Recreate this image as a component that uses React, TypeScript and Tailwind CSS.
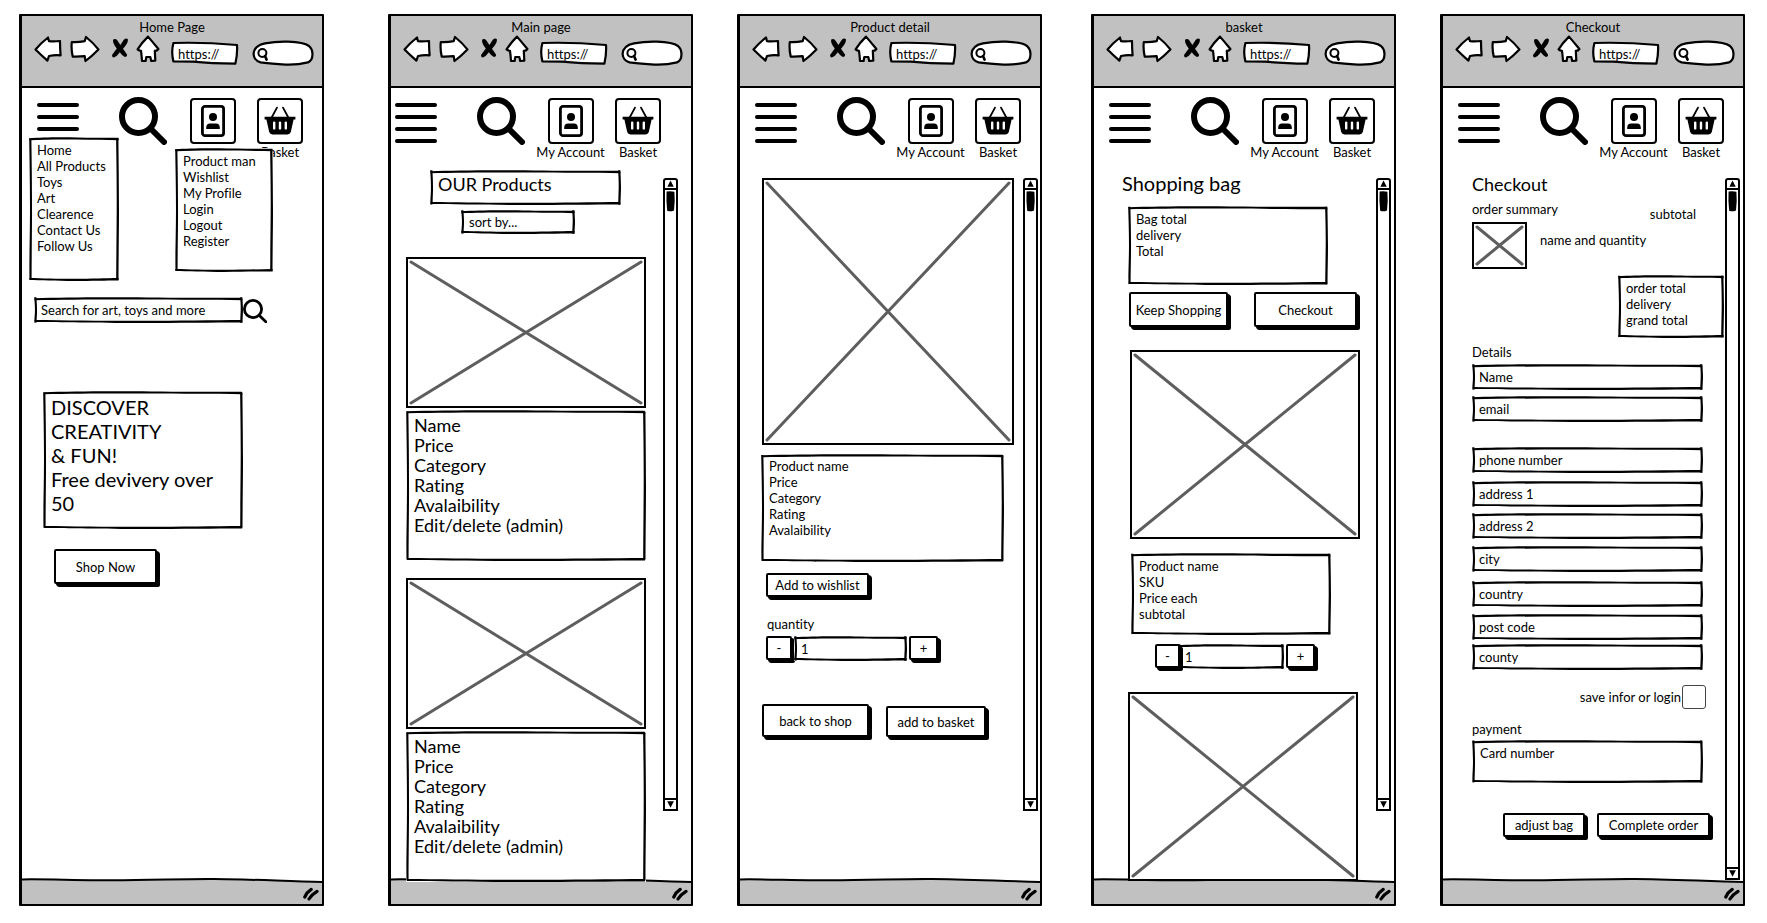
import type { ReactNode } from "react";

/* ---------- Hand-drawn strokes ---------- */

function Edges() {
  return (
    <>
      <svg aria-hidden="true" viewBox="0 0 100 4" preserveAspectRatio="none" className="pointer-events-none absolute inset-x-0 top-0 h-1 w-full">
        <path d="M0.2 1.2 C12 0.2 30 0 45 0.2 C60 0.5 80 1 99.4 0.7 L99.8 3.2 C85 3 70 3 52 2.6 C35 2.4 15 2.6 0.4 3.2Z" />
      </svg>
      <svg aria-hidden="true" viewBox="0 0 100 4" preserveAspectRatio="none" className="pointer-events-none absolute inset-x-0 bottom-0 h-1 w-full">
        <path d="M0.3 0.9 C15 1.2 30 1.8 50 1.8 C70 1.8 85 1.2 99.6 1 L99.6 3.4 C85 3.4 70 3.8 50 4 C30 4 12 3.2 0.4 3Z" />
      </svg>
      <svg aria-hidden="true" viewBox="0 0 4 100" preserveAspectRatio="none" className="pointer-events-none absolute inset-y-0 left-0 h-full w-1">
        <path d="M0.2 1 C0.6 20 1.2 40 0.9 60 C0.6 80 0.2 90 0.5 99 L2.6 98 C2.6 80 3.2 60 3 45 C3 25 2.5 10 2.4 1Z" />
      </svg>
      <svg aria-hidden="true" viewBox="0 0 4 100" preserveAspectRatio="none" className="pointer-events-none absolute inset-y-0 right-0 h-full w-1">
        <path d="M1.1 1 C1.4 15 1.8 30 1.7 50 C1.5 70 1.3 85 1.2 99 L3.5 99 C3.6 80 4 65 4 50 C3.9 30 3.6 15 3.4 1Z" />
      </svg>
    </>
  );
}

function BackIcon() {
  return (
    <svg aria-hidden="true" viewBox="0 0 28 28" className="h-7 w-7">
      <path d="M1.5 14.5 Q7 8 14 2.5 L15 6.2 Q20 6.8 26 6 Q26 13 26.6 20.4 Q21 19.8 15 21 L13.4 25.6 Q7 20 1.5 14.5Z" fill="#fff" stroke="#000" strokeWidth="2.2" strokeLinejoin="round" />
    </svg>
  );
}

function ForwardIcon() {
  return (
    <svg aria-hidden="true" viewBox="0 0 30 28" className="h-7 w-[30px]">
      <path d="M1.8 7 Q8 7.4 14.7 6.2 L16 2 Q23 7.6 28.4 14.4 Q22 21 15.5 26 L14.7 21.2 Q9 21.8 2.7 21.6 Q1 14 1.8 7Z" fill="#fff" stroke="#000" strokeWidth="2.2" strokeLinejoin="round" />
    </svg>
  );
}

function StopIcon() {
  return (
    <svg aria-hidden="true" viewBox="0 0 16 28" className="h-7 w-4">
      <path d="M1.2 4.6 Q3.4 3 5.4 5.4 L8.4 10 L11.8 4.8 Q14.4 2.4 16 4.6 Q16 8.6 11 13.8 L15 19.6 Q15.4 22 12.8 22 Q9.6 20 7.8 17.2 Q4.8 21.6 1.8 22.6 Q-0.4 22 0.2 19.8 L4.8 13.6 Q0.4 8 1.2 4.6Z" />
    </svg>
  );
}

function HomeIcon() {
  return (
    <svg aria-hidden="true" viewBox="0 0 24 28" className="h-7 w-6">
      <path d="M12 1.6 Q17 7.4 22.4 14 Q21 16 18.8 15.8 L19.3 25.6 L15.2 26 L14.3 22 L10.3 22 L9.6 26 L6 25.8 Q5.6 20 5 15.8 Q3 15.8 1.6 14.4 Q6 7.4 12 1.6Z" fill="#fff" stroke="#000" strokeWidth="2.2" strokeLinejoin="round" />
    </svg>
  );
}

function Magnifier() {
  return (
    <svg aria-hidden="true" viewBox="0 0 48 48" className="h-12 w-12">
      <circle cx="19.5" cy="19.5" r="16.5" fill="none" stroke="#000" strokeWidth="6" />
      <path d="M32 32 L45 45" stroke="#000" strokeWidth="6" strokeLinecap="round" />
    </svg>
  );
}

function MagnifierSmall() {
  return (
    <svg aria-hidden="true" viewBox="0 0 24 24" className="h-6 w-6">
      <circle cx="10" cy="10" r="8.6" fill="none" stroke="#000" strokeWidth="2.8" />
      <path d="M16.4 16.4 L22.8 22.8" stroke="#000" strokeWidth="2.8" strokeLinecap="round" />
    </svg>
  );
}

function AccountIcon() {
  return (
    <svg aria-hidden="true" viewBox="0 0 24 32" className="h-8 w-6">
      <rect x="1.4" y="1.4" width="21.2" height="29.2" rx="2.6" fill="none" stroke="#000" strokeWidth="2.8" />
      <circle cx="12" cy="12" r="4" />
      <path d="M5.2 24 V22.6 Q5.4 18.4 9 18.4 H15 Q18.6 18.4 18.8 22.6 V24Z" />
    </svg>
  );
}

function BasketIcon() {
  return (
    <svg aria-hidden="true" viewBox="0 0 32 32" className="h-8 w-8">
      <path d="M13 4.6 L7.4 15 M19 4.6 L24.6 15" stroke="#000" strokeWidth="1.8" strokeLinecap="round" />
      <path d="M0.6 13.8 H31.4 V16.4 H29.6 L26.8 29 Q26 31.4 23.6 31.4 H8.4 Q6 31.4 5.2 29 L2.4 16.4 H0.6Z" />
      <path d="M10.2 19.6 V25.4 M16 19.6 V25.4 M21.8 19.6 V25.4" stroke="#fff" strokeWidth="2.4" strokeLinecap="round" />
    </svg>
  );
}

/* ---------- Window chrome ---------- */

function Toolbar({ title }: { title: string }) {
  return (
    <header className="border-b-2 border-black bg-[#c1c1c1] pb-5 pt-[3px]">
      <h1 className="text-center text-[13px] leading-4">{title}</h1>
      <div className="flex pl-3 pr-2">
        <button type="button" aria-label="Back" className="self-start"><BackIcon /></button>
        <button type="button" aria-label="Forward" className="ml-2 self-start"><ForwardIcon /></button>
        <button type="button" aria-label="Stop" className="ml-3 self-start"><StopIcon /></button>
        <button type="button" aria-label="Home" className="ml-2 self-start"><HomeIcon /></button>
        <div className="relative ml-[11px] mt-1.5 h-6 min-w-0 flex-[68]">
          <svg aria-hidden="true" viewBox="0 0 68 24" preserveAspectRatio="none" className="absolute inset-0 h-full w-full">
            <path d="M2.4 2 Q32 1 66 4 Q66.6 13 64.4 22.6 Q40 22.4 22 20.6 Q10 20.4 2.4 20.4 Q0 11 2.4 2Z" fill="#fff" stroke="#000" strokeWidth="2.2" strokeLinejoin="round" />
          </svg>
          <input aria-label="Address" defaultValue="https://" className="relative h-[22px] w-full bg-transparent pl-[7px] text-[13px] leading-4 outline-none" />
        </div>
        <div className="relative ml-[13px] mt-[5px] h-[26px] min-w-0 flex-[62]">
          <svg aria-hidden="true" viewBox="0 0 62 26" preserveAspectRatio="none" className="absolute inset-0 h-full w-full">
            <path d="M1.6 14 Q2 5.6 13 3.4 Q24 1.2 36 1.6 Q52 2.2 57 6 Q61 9.6 60.4 15 Q60.4 20.4 56 22.4 Q44 25.4 30 24.4 Q16 23.6 8.6 22.4 Q2 20.4 1.6 14Z" fill="#fff" stroke="#000" strokeWidth="2.2" />
            <circle cx="10.4" cy="13" r="4" fill="none" stroke="#000" strokeWidth="2" />
            <path d="M13 16 L14.6 19.6" stroke="#000" strokeWidth="2.6" strokeLinecap="round" />
          </svg>
          <input aria-label="Web search" className="relative block h-full w-full bg-transparent pl-5 pr-2 text-[13px] outline-none" />
        </div>
      </div>
    </header>
  );
}

function StatusBar() {
  return (
    <footer className="flex h-[26px] flex-col">
      <svg aria-hidden="true" viewBox="0 0 300 6" preserveAspectRatio="none" className="block h-1.5 w-full">
        <path d="M0 1.4 C30 1 50 2.4 80 2.2 C120 2.6 160 0.8 192 1 C220 1 260 3 300 4 V6 H0Z" fill="#c1c1c1" />
        <path d="M0 1.4 C30 1 50 2.4 80 2.2 C120 2.6 160 0.8 192 1 C220 1 260 3 300 4" fill="none" stroke="#000" strokeWidth="2" />
      </svg>
      <div className="flex flex-1 items-start justify-end bg-[#c1c1c1] pr-[3px] pt-[3px]">
        <svg aria-hidden="true" viewBox="0 0 16 14" className="h-3.5 w-4">
          <path d="M1.8 10 Q4 5 8.2 2.4 M6 12 Q9 7.4 14 4.4" fill="none" stroke="#000" strokeWidth="3.2" strokeLinecap="round" />
        </svg>
      </div>
    </footer>
  );
}

function SiteNav({ className, accountCaption = true, children }: { className: string; accountCaption?: boolean; children?: ReactNode }) {
  return (
    <nav className={`relative flex h-[73px] items-start pt-2 ${className}`}>
      <button type="button" aria-label="Menu" className="mt-[7px] flex w-[42px] shrink-0 flex-col gap-2">
        <span className="h-1 w-full rounded-full bg-black" />
        <span className="h-1 w-full rounded-full bg-black" />
        <span className="h-1 w-full rounded-full bg-black" />
        <span className="h-1 w-full rounded-full bg-black" />
      </button>
      <button type="button" aria-label="Search" className="ml-10 mt-px"><Magnifier /></button>
      <button type="button" aria-label="My Account" className="ml-3 flex w-[67px] flex-col items-center text-[13px] leading-4">
        <span className="mt-0.5 flex h-[46px] w-[46px] items-center justify-center rounded border-2 border-black">
          <AccountIcon />
        </span>
        {accountCaption && <span className="whitespace-nowrap">My Account</span>}
      </button>
      <button type="button" className="ml-[11px] flex w-[46px] flex-col items-center text-[13px] leading-4">
        <span className="mt-0.5 flex h-[46px] w-[46px] items-center justify-center rounded border-2 border-black pb-1">
          <BasketIcon />
        </span>
        <span>Basket</span>
      </button>
      {children}
    </nav>
  );
}

function ScrollRail({ className }: { className: string }) {
  return (
    <div aria-hidden="true" className={`flex w-[15px] shrink-0 flex-col rounded-t-[3px] border-2 border-black bg-white ${className}`}>
      <svg viewBox="0 0 11 10" className="h-2.5 w-full border-b-2 border-black">
        <path d="M5.5 0.6 L9.6 8.4 H1.6Z" />
      </svg>
      <svg viewBox="0 0 11 22" className="h-[22px] w-full">
        <path d="M1.6 1.6 Q5.5 0.6 9.4 1.8 Q10.2 11 9 20.4 Q5.5 22 2.2 20.8 Q1 11 1.6 1.6Z" />
      </svg>
      <div className="flex-1" />
      <svg viewBox="0 0 11 11" className="h-[11px] w-full border-t-2 border-black">
        <path d="M1.4 1.6 H9.6 L5.6 9.4Z" />
      </svg>
    </div>
  );
}

function Frame({ title, className = "", children }: { title: string; className?: string; children: ReactNode }) {
  return (
    <section aria-label={title} className={`flex min-w-[300px] flex-1 flex-col rounded-[1px] border-2 border-l-[3px] border-black bg-white ${className}`}>
      <Toolbar title={title} />
      <div className="flex flex-1 flex-col">{children}</div>
      <StatusBar />
    </section>
  );
}

/* ---------- Sketched controls ---------- */

function Panel({ className, children }: { className: string; children: ReactNode }) {
  return (
    <div className={`bg-white px-2 ${className}`}>
      <Edges />
      {children}
    </div>
  );
}

function Lines({ items, className }: { items: string[]; className: string }) {
  return (
    <ul className={className}>
      {items.map((item) => (
        <li key={item} className="whitespace-nowrap">{item}</li>
      ))}
    </ul>
  );
}

function SketchButton({ className, label, children }: { className: string; label?: string; children: ReactNode }) {
  return (
    <button
      type="button"
      aria-label={label}
      className={`rounded-[2px] border-2 border-black bg-white text-center text-[13px] leading-4 whitespace-nowrap shadow-[2px_2px_0_#000,3px_3px_0_#000] ${className}`}
    >
      {children}
    </button>
  );
}

function Field({ label, className, value }: { label: string; className: string; value?: string }) {
  return (
    <div className={`relative bg-white ${className}`}>
      <Edges />
      <input
        aria-label={label}
        placeholder={value ? undefined : label}
        defaultValue={value}
        className="relative block h-full w-full bg-transparent px-[7px] text-[13px] leading-4 outline-none placeholder:text-black placeholder:opacity-100"
      />
    </div>
  );
}

function ImageBox({ className }: { className: string }) {
  return (
    <div role="img" aria-label="Product image" className={`border-2 border-black bg-white p-[3px] ${className}`}>
      <svg aria-hidden="true" width="100%" height="100%" className="block h-full w-full overflow-visible">
        <line x1="0" y1="0" x2="100%" y2="100%" stroke="#5e5e5e" strokeWidth="3" strokeLinecap="round" />
        <line x1="100%" y1="0" x2="0" y2="100%" stroke="#5e5e5e" strokeWidth="3" strokeLinecap="round" />
      </svg>
    </div>
  );
}

/* ---------- Screens ---------- */

function HomeScreen() {
  return (
    <Frame title="Home Page">
      <SiteNav className="pl-[15px]" accountCaption={false}>
        <Panel className="absolute left-[7px] top-[49px] h-36 w-[90px] pt-[5px]">
          <Lines
            className="text-[13px] leading-4"
            items={["Home", "All Products", "Toys", "Art", "Clearence", "Contact Us", "Follow Us"]}
          />
        </Panel>
        <Panel className="absolute left-[153px] top-[60px] h-[124px] w-[98px] pt-[5px]">
          <Lines
            className="text-[13px] leading-4"
            items={["Product man", "Wishlist", "My Profile", "Login", "Logout", "Register"]}
          />
        </Panel>
      </SiteNav>
      <main className="flex flex-1 flex-col items-stretch pt-[136px]">
        <form className="ml-3 mr-[55px] flex" onSubmit={(e) => e.preventDefault()}>
          <Field label="Search for art, toys and more" className="h-[26px] min-w-0 flex-1" />
          <button type="button" aria-label="Submit search" className="mt-px"><MagnifierSmall /></button>
        </form>
        <Panel className="relative ml-[21px] mr-[79px] mt-[68px] min-h-[138px] pt-1">
          <p className="text-[20px] leading-6">
            DISCOVER<br />CREATIVITY<br />&amp; FUN!<br />Free devivery over<br />50
          </p>
        </Panel>
        <SketchButton className="ml-8 mt-5 h-[35px] w-[103px] self-start">Shop Now</SketchButton>
      </main>
    </Frame>
  );
}

const productLines = ["Name", "Price", "Category", "Rating", "Avalaibility", "Edit/delete (admin)"];

function MainScreen() {
  return (
    <Frame title="Main page" className="ml-16">
      <SiteNav className="pl-1" />
      <main className="flex flex-1 pt-[9px]">
        <div className="relative z-10 -mb-1 min-w-0 flex-1 pl-[15px] pr-[17px]">
          <Panel className="relative ml-6 mr-[25px] h-[35px] pt-0.5">
            <h2 className="text-[18px] leading-6">OUR Products</h2>
          </Panel>
          <div className="relative ml-[55px] mr-[71px] mt-[5px] h-6">
            <Edges />
            <select aria-label="Sort products" className="relative block h-full w-full appearance-none bg-transparent px-2 text-[13px] leading-4 outline-none">
              <option>sort by...</option>
            </select>
          </div>
          <ImageBox className="mt-[23px] h-[151px]" />
          <Panel className="relative mt-0.5 h-[151px] pt-[5px]">
            <Lines className="text-[18px] leading-5" items={productLines} />
          </Panel>
          <ImageBox className="mt-[17px] h-[151px]" />
          <Panel className="relative mt-0.5 h-[151px] pt-[5px]">
            <Lines className="text-[18px] leading-5" items={productLines} />
          </Panel>
        </div>
        <ScrollRail className="mb-[67px] mr-[13px] mt-2" />
      </main>
    </Frame>
  );
}

function DetailScreen() {
  return (
    <Frame title="Product detail" className="ml-11">
      <SiteNav className="pl-[15px]" />
      <main className="flex flex-1 pt-[17px]">
        <div className="min-w-0 flex-1 pl-[21px]">
          <ImageBox className="ml-px mr-[9px] h-[267px]" />
          <Panel className="relative mr-[19px] mt-[9px] h-[108px] pt-1">
            <Lines className="text-[13px] leading-4" items={["Product name", "Price", "Category", "Rating", "Avalaibility"]} />
          </Panel>
          <SketchButton className="ml-[5px] mt-[11px] block h-6 w-[103px]">Add to wishlist</SketchButton>
          <p className="ml-1.5 mt-[19px] text-[13px] leading-4">quantity</p>
          <div className="ml-[5px] mt-1 flex gap-0.5">
            <SketchButton label="Decrease quantity" className="h-6 w-[26px]">-</SketchButton>
            <Field label="Quantity" value="1" className="h-[25px] w-[113px]" />
            <SketchButton label="Increase quantity" className="h-6 w-[29px]">+</SketchButton>
          </div>
          <div className="ml-px mt-[43px] flex items-end gap-[17px]">
            <SketchButton className="h-[33px] w-[107px]">back to shop</SketchButton>
            <SketchButton className="h-[31px] w-[100px]">add to basket</SketchButton>
          </div>
        </div>
        <ScrollRail className="mb-[67px] mr-0.5" />
      </main>
    </Frame>
  );
}

function BasketScreen() {
  return (
    <Frame title="basket" className="ml-[49px]">
      <SiteNav className="pl-[15px]" />
      <main className="flex flex-1 pt-[10px]">
        <div className="relative z-10 -mb-[3px] min-w-0 flex-1 pl-7">
          <h2 className="text-[20px] leading-6">Shopping bag</h2>
          <Panel className="relative ml-1.5 mr-12 mt-[11px] h-[79px] pt-[5px]">
            <Lines className="text-[13px] leading-4" items={["Bag total", "delivery", "Total"]} />
          </Panel>
          <div className="ml-[7px] mt-[7px] flex gap-[26px]">
            <SketchButton className="h-[35px] w-[99px]">Keep Shopping</SketchButton>
            <SketchButton className="h-[35px] w-[103px]">Checkout</SketchButton>
          </div>
          <ImageBox className="ml-2 mr-4 mt-[23px] h-[189px]" />
          <Panel className="relative ml-[9px] mr-[45px] mt-3.5 h-[82px] pt-[5px]">
            <Lines className="text-[13px] leading-4" items={["Product name", "SKU", "Price each", "subtotal"]} />
          </Panel>
          <div className="ml-[33px] mt-[9px] flex">
            <SketchButton label="Decrease quantity" className="z-10 h-6 w-[25px]">-</SketchButton>
            <Field label="Quantity" value="1" className="-ml-0.5 h-[25px] w-[106px]" />
            <SketchButton label="Increase quantity" className="ml-0.5 h-6 w-[29px]">+</SketchButton>
          </div>
          <ImageBox className="ml-1.5 mr-[18px] mt-[23px] h-[189px]" />
        </div>
        <ScrollRail className="mb-[67px] mr-[3px] mt-[7px]" />
      </main>
    </Frame>
  );
}

const checkoutFields = [
  { label: "Name", gap: "mt-1" },
  { label: "email", gap: "mt-1.5" },
  { label: "phone number", gap: "mt-[25px]" },
  { label: "address 1", gap: "mt-2" },
  { label: "address 2", gap: "mt-1.5" },
  { label: "city", gap: "mt-[7px]" },
  { label: "country", gap: "mt-[9px]" },
  { label: "post code", gap: "mt-[7px]" },
  { label: "county", gap: "mt-1" },
];

function CheckoutScreen() {
  return (
    <Frame title="Checkout" className="ml-11">
      <SiteNav className="pl-[15px]" />
      <main className="flex flex-1 pt-[11px]">
        <form className="min-w-0 flex-1 pl-[29px] text-[13px] leading-4" onSubmit={(e) => e.preventDefault()}>
          <h2 className="text-[18px] leading-6">Checkout</h2>
          <div className="mr-[29px] mt-[5px] flex justify-between">
            <p>order summary</p>
            <p className="mt-[5px]">subtotal</p>
          </div>
          <div className="flex">
            <ImageBox className="h-[47px] w-[55px]" />
            <p className="ml-[13px] mt-2.5">name and quantity</p>
          </div>
          <Panel className="relative ml-auto mr-px mt-1.5 h-[63px] w-[106px] pt-[5px]">
            <Lines className="" items={["order total", "delivery", "grand total"]} />
          </Panel>
          <h3 className="mt-1.5">Details</h3>
          {checkoutFields.map((f) => (
            <Field key={f.label} label={f.label} className={`mr-[22px] h-[26px] ${f.gap}`} />
          ))}
          <div className="mr-[19px] mt-[15px] flex items-center justify-end">
            <label htmlFor="save-info">save infor or login</label>
            <input id="save-info" type="checkbox" className="ml-px h-6 w-6 appearance-none rounded-[3px] border border-[#444] bg-white" />
          </div>
          <h3 className="mt-3">payment</h3>
          <div className="relative mr-[22px] mt-[3px] h-[43px]">
            <Edges />
            <textarea
              aria-label="Card number"
              placeholder="Card number"
              className="relative block h-full w-full resize-none bg-transparent px-2 pt-[5px] outline-none placeholder:text-black placeholder:opacity-100"
            />
          </div>
          <div className="ml-[31px] mt-[30px] flex gap-3">
            <SketchButton className="h-6 w-[82px]">adjust bag</SketchButton>
            <SketchButton className="h-6 w-[113px]">Complete order</SketchButton>
          </div>
        </form>
        <ScrollRail className="relative -mb-0.5 mr-[3px] mt-1.5" />
      </main>
    </Frame>
  );
}

export default function App() {
  return (
    <div className="flex min-h-screen bg-white pb-[18px] pl-[19px] pr-[22px] pt-[14px] font-['Lato',sans-serif] text-black [font-variant-ligatures:none]">
      <HomeScreen />
      <MainScreen />
      <DetailScreen />
      <BasketScreen />
      <CheckoutScreen />
    </div>
  );
}
